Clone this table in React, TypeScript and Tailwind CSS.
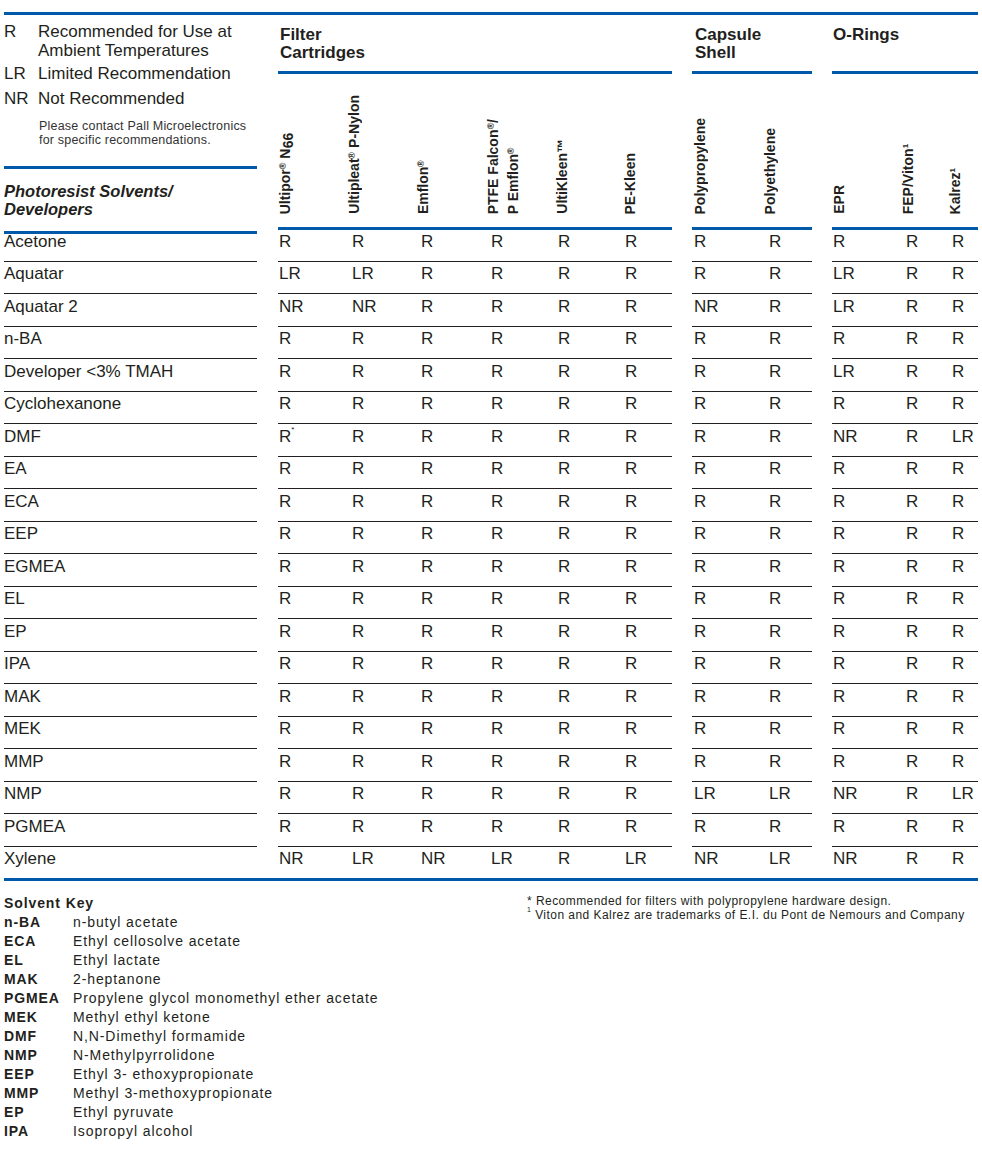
import React from 'react';

type Group = string[];

interface SolventRow {
  name: string;
  filter: Group;
  capsule: Group;
  oring: Group;
}

const raw: [string, string][] = [
  ['Acetone', 'R R R R R R|R R|R R R'],
  ['Aquatar', 'LR LR R R R R|R R|LR R R'],
  ['Aquatar 2', 'NR NR R R R R|NR R|LR R R'],
  ['n-BA', 'R R R R R R|R R|R R R'],
  ['Developer <3% TMAH', 'R R R R R R|R R|LR R R'],
  ['Cyclohexanone', 'R R R R R R|R R|R R R'],
  ['DMF', 'R* R R R R R|R R|NR R LR'],
  ['EA', 'R R R R R R|R R|R R R'],
  ['ECA', 'R R R R R R|R R|R R R'],
  ['EEP', 'R R R R R R|R R|R R R'],
  ['EGMEA', 'R R R R R R|R R|R R R'],
  ['EL', 'R R R R R R|R R|R R R'],
  ['EP', 'R R R R R R|R R|R R R'],
  ['IPA', 'R R R R R R|R R|R R R'],
  ['MAK', 'R R R R R R|R R|R R R'],
  ['MEK', 'R R R R R R|R R|R R R'],
  ['MMP', 'R R R R R R|R R|R R R'],
  ['NMP', 'R R R R R R|LR LR|NR R LR'],
  ['PGMEA', 'R R R R R R|R R|R R R'],
  ['Xylene', 'NR LR NR LR R LR|NR LR|NR R R'],
];

const rows: SolventRow[] = raw.map(([name, s]) => {
  const [filter, capsule, oring] = s.split('|').map((g) => g.split(' '));
  return { name, filter, capsule, oring };
});

const solventKey: [string, string][] = [
  ['n-BA', 'n-butyl acetate'],
  ['ECA', 'Ethyl cellosolve acetate'],
  ['EL', 'Ethyl lactate'],
  ['MAK', '2-heptanone'],
  ['PGMEA', 'Propylene glycol monomethyl ether acetate'],
  ['MEK', 'Methyl ethyl ketone'],
  ['DMF', 'N,N-Dimethyl formamide'],
  ['NMP', 'N-Methylpyrrolidone'],
  ['EEP', 'Ethyl 3- ethoxypropionate'],
  ['MMP', 'Methyl 3-methoxypropionate'],
  ['EP', 'Ethyl pyruvate'],
  ['IPA', 'Isopropyl alcohol'],
];

const Value = ({ v }: { v: string }) =>
  v === 'R*' ? (
    <span>
      R<sup className="text-[8px] align-[6px]">*</sup>
    </span>
  ) : (
    <span>{v}</span>
  );

const BlueLine = () => <div className="h-[3px] bg-[#0059a9]" />;

// rotated column label, reads bottom to top
const Vertical = ({ children, className }: { children: React.ReactNode; className: string }) => (
  <div
    className={`[writing-mode:vertical-rl] [text-orientation:sideways] rotate-180 whitespace-nowrap text-[14px] font-bold leading-[18px] ${className}`}
  >
    {children}
  </div>
);

const Reg = () => <span className="relative left-[4px] text-[9px]">®</span>;
const One = () => <span className="relative left-[5px] text-[8px]">1</span>;

const Row = ({ row, first }: { row: SolventRow; first: boolean }) => {
  const cell = first
    ? 'h-[26.5px] leading-[15px]'
    : 'h-[32.5px] border-t border-[#231f20] pt-[2.5px] leading-[20px]';
  return (
    <div className="flex text-[17px]">
      <div className={`w-[253px] ${cell}`}>{row.name}</div>
      <div className={`ml-[21px] w-[394px] grid grid-cols-[73px_69px_70px_67px_67px_1fr] pl-[1px] ${cell}`}>
        {row.filter.map((v, i) => (
          <Value key={i} v={v} />
        ))}
      </div>
      <div className={`ml-[20px] w-[120px] grid grid-cols-[75px_1fr] pl-[2px] ${cell}`}>
        {row.capsule.map((v, i) => (
          <Value key={i} v={v} />
        ))}
      </div>
      <div className={`ml-[20px] w-[146px] grid grid-cols-[73px_46px_1fr] pl-[1px] ${cell}`}>
        {row.oring.map((v, i) => (
          <Value key={i} v={v} />
        ))}
      </div>
    </div>
  );
};

export default function App() {
  return (
    <div className="min-h-screen bg-white font-['Liberation_Sans',Arial,sans-serif] text-[#231f20]">
      <div className="w-[978px] pl-[4px] pt-[12px]">
        <BlueLine />

        {/* header */}
        <div className="flex items-start">
          <div className="w-[253px] flex flex-col">
            <div className="h-[151px] pt-[7px] text-[17px] leading-[19px]">
              <div className="grid grid-cols-[34px_1fr]">
                <span>R</span>
                <span>
                  Recommended for Use at
                  <br />
                  Ambient Temperatures
                </span>
              </div>
              <div className="mt-[4px] grid grid-cols-[34px_1fr]">
                <span>LR</span>
                <span>Limited Recommendation</span>
              </div>
              <div className="mt-[6px] grid grid-cols-[34px_1fr]">
                <span>NR</span>
                <span>Not Recommended</span>
              </div>
              <p className="mt-[11px] pl-[35px] text-[12.5px] leading-[14px] tracking-[0.2px] text-[#333]">
                Please contact Pall Microelectronics
                <br />
                for specific recommendations.
              </p>
            </div>
            <BlueLine />
            <div className="h-[62px] pt-[12.5px] text-[16.5px] font-bold italic leading-[18px]">
              Photoresist Solvents/
              <br />
              Developers
            </div>
            <BlueLine />
          </div>

          <div className="ml-[21px] w-[394px] flex flex-col">
            <div className="h-[56px] pt-[10.5px] pl-[2px] text-[17px] font-bold leading-[18px]">
              Filter
              <br />
              Cartridges
            </div>
            <BlueLine />
            <div className="h-[153px] grid grid-cols-[73px_69px_70px_67px_67px_1fr] items-end pb-[13px] pl-[1px]">
              <Vertical className="ml-[-3px]">
                Ultipor<Reg /> N<span className="relative left-[-3px]">66</span>
              </Vertical>
              <Vertical className="ml-[-7px]">
                Ultipleat<Reg /> P-Nylon
              </Vertical>
              <Vertical className="ml-[-7px]">
                Emflon<Reg />
              </Vertical>
              <Vertical className="ml-[-7px]">
                PTFE Falcon<Reg />/
                <br />P Emflon<Reg />
              </Vertical>
              <Vertical className="ml-[-5px]">UltiKleen™</Vertical>
              <Vertical className="ml-[-4px]">PE-Kleen</Vertical>
            </div>
            <BlueLine />
          </div>

          <div className="ml-[20px] w-[120px] flex flex-col">
            <div className="h-[56px] pt-[10.5px] pl-[3px] text-[17px] font-bold leading-[18px]">
              Capsule
              <br />
              Shell
            </div>
            <BlueLine />
            <div className="h-[153px] grid grid-cols-[75px_1fr] items-end pb-[13px] pl-[2px]">
              <Vertical className="ml-[-3px]">Polypropylene</Vertical>
              <Vertical className="ml-[-8px]">Polyethylene</Vertical>
            </div>
            <BlueLine />
          </div>

          <div className="ml-[20px] w-[146px] flex flex-col">
            <div className="h-[56px] pt-[10.5px] pl-[1px] text-[17px] font-bold leading-[18px]">O-Rings</div>
            <BlueLine />
            <div className="h-[153px] grid grid-cols-[73px_46px_1fr] items-end pb-[13px] pl-[1px]">
              <Vertical className="ml-[-3px]">EPR</Vertical>
              <Vertical className="ml-[-7px]">
                FEP/Viton<One />
              </Vertical>
              <Vertical className="ml-[-6px]">
                Kalrez<One />
              </Vertical>
            </div>
            <BlueLine />
          </div>
        </div>

        {/* rows */}
        <div>
          {rows.map((row, i) => (
            <Row key={row.name} row={row} first={i === 0} />
          ))}
        </div>
        <BlueLine />

        {/* footer */}
        <div className="flex">
          <div className="w-[523px] pt-[13px] text-[14px] leading-[19px] tracking-[0.9px]">
            <div className="font-bold">Solvent Key</div>
            {solventKey.map(([abbr, desc]) => (
              <div key={abbr} className="grid grid-cols-[69px_1fr]">
                <span className="font-bold">{abbr}</span>
                <span>{desc}</span>
              </div>
            ))}
          </div>
          <div className="pt-[12.5px] text-[12px] leading-[14.5px] tracking-[0.45px]">
            <p>* Recommended for filters with polypropylene hardware design.</p>
            <p>
              <sup className="text-[7px] align-[4px]">1</sup> Viton and Kalrez are trademarks of E.I. du Pont de
              Nemours and Company
            </p>
          </div>
        </div>
      </div>
    </div>
  );
}
